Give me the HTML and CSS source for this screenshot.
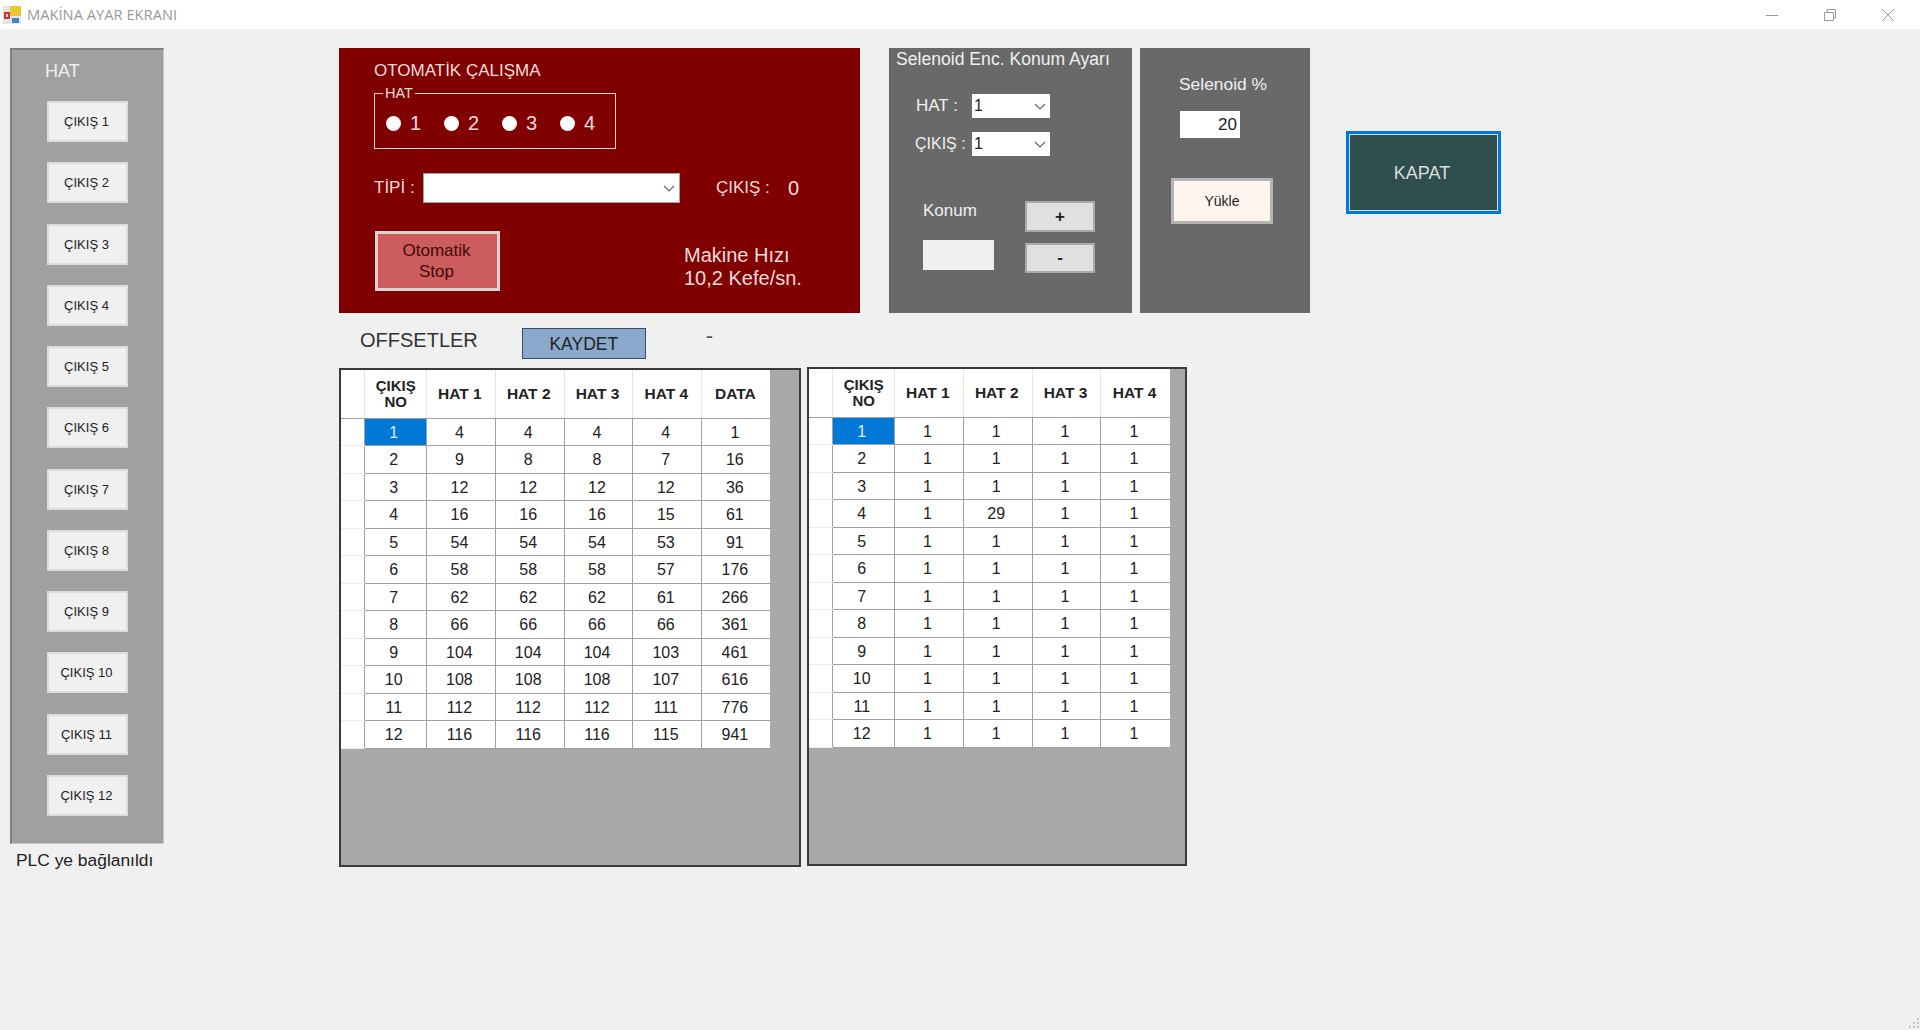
FILE: index.html
```html
<!DOCTYPE html>
<html lang="tr">
<head>
  <meta charset="UTF-8">
  <title>MAKİNA AYAR EKRANI</title>
  <link rel="stylesheet" href="styles.css">
</head>
<body>

  <header class="titlebar">
    <svg class="app-icon" width="18" height="18" viewBox="0 0 18 18">
      <rect x="0" y="0" width="18" height="18" fill="#e4e4ea"/>
      <rect x="7" y="0" width="11" height="10" fill="#e8c832"/>
      <rect x="1" y="6" width="6" height="7" fill="#c8372d"/>
      <rect x="3" y="8" width="2" height="3" fill="#f4d8d0"/>
      <rect x="9" y="12" width="7" height="5" fill="#3f83cf"/>
    </svg>
    <span class="title">MAKİNA AYAR EKRANI</span>
    <div class="win-buttons">
      <svg width="12" height="12" viewBox="0 0 12 12"><path d="M0 6.5H12" stroke="#999" fill="none"/></svg>
      <svg width="12" height="12" viewBox="0 0 12 12"><path d="M.5 3.5H9.5V11.5H.5ZM3 3V.5H11.5V9H10" stroke="#999" fill="none"/></svg>
      <svg width="12" height="12" viewBox="0 0 12 12"><path d="M0 0L12 12M12 0L0 12" stroke="#999" fill="none"/></svg>
    </div>
  </header>

  <main class="main">

    <div class="left">
      <nav class="sidebar">
        <div class="sidebar-title">HAT</div>
        <button class="out-btn">ÇIKIŞ 1</button>
        <button class="out-btn">ÇIKIŞ 2</button>
        <button class="out-btn">ÇIKIŞ 3</button>
        <button class="out-btn">ÇIKIŞ 4</button>
        <button class="out-btn">ÇIKIŞ 5</button>
        <button class="out-btn">ÇIKIŞ 6</button>
        <button class="out-btn">ÇIKIŞ 7</button>
        <button class="out-btn">ÇIKIŞ 8</button>
        <button class="out-btn">ÇIKIŞ 9</button>
        <button class="out-btn">ÇIKIŞ 10</button>
        <button class="out-btn">ÇIKIŞ 11</button>
        <button class="out-btn">ÇIKIŞ 12</button>
      </nav>
      <div class="status">PLC ye bağlanıldı</div>
    </div>

    <div class="center">
      <div class="top-row">

        <section class="auto-panel">
          <div class="auto-title">OTOMATİK ÇALIŞMA</div>
          <fieldset class="line-group">
            <legend>HAT</legend>
            <label><input type="radio" name="hat"> 1</label>
            <label><input type="radio" name="hat"> 2</label>
            <label><input type="radio" name="hat"> 3</label>
            <label><input type="radio" name="hat"> 4</label>
          </fieldset>
          <div class="type-row">
            <span class="type-label">TİPİ :</span>
            <div class="combo combo-type">
              <svg width="12" height="7" viewBox="0 0 12 7"><path d="M1 1L6 6L11 1" stroke="#666" stroke-width="1.2" fill="none"/></svg>
            </div>
            <span class="out-label">ÇIKIŞ :</span>
            <span class="out-value">0</span>
          </div>
          <div class="stop-row">
            <button class="stop-btn">Otomatik<br>Stop</button>
            <div class="speed">Makine Hızı<br>10,2 Kefe/sn.</div>
          </div>
        </section>

        <section class="enc-panel">
          <div class="enc-title">Selenoid Enc. Konum Ayarı</div>
          <div class="enc-row enc-row-first">
            <span class="enc-label">HAT :</span>
            <div class="combo combo-small">
              <span>1</span>
              <svg width="12" height="7" viewBox="0 0 12 7"><path d="M1 1L6 6L11 1" stroke="#666" stroke-width="1.2" fill="none"/></svg>
            </div>
          </div>
          <div class="enc-row">
            <span class="enc-label enc-label-out">ÇIKIŞ :</span>
            <div class="combo combo-small">
              <span>1</span>
              <svg width="12" height="7" viewBox="0 0 12 7"><path d="M1 1L6 6L11 1" stroke="#666" stroke-width="1.2" fill="none"/></svg>
            </div>
          </div>
          <div class="pos-block">
            <div class="pos-left">
              <div class="pos-label">Konum</div>
              <div class="pos-box"></div>
            </div>
            <div class="pos-right">
              <button class="step-btn step-plus">+</button>
              <button class="step-btn step-minus">-</button>
            </div>
          </div>
        </section>

        <section class="percent-panel">
          <div class="percent-label">Selenoid %</div>
          <div class="percent-box">20</div>
          <button class="load-btn">Yükle</button>
        </section>

        <button class="close-btn">KAPAT</button>
      </div>

      <div class="offset-row">
        <span class="offset-title">OFFSETLER</span>
        <button class="save-btn">KAYDET</button>
        <span class="dash">-</span>
      </div>

      <div class="grids">
        <div class="grid-box grid-left">
          <table class="grid">
            <thead>
              <tr><th class="corner"></th><th>ÇIKIŞ<br>NO</th><th>HAT 1</th><th>HAT 2</th><th>HAT 3</th><th>HAT 4</th><th>DATA</th></tr>
            </thead>
            <tbody>
              <tr><th></th><td class="selected">1</td><td>4</td><td>4</td><td>4</td><td>4</td><td>1</td></tr>
              <tr><th></th><td>2</td><td>9</td><td>8</td><td>8</td><td>7</td><td>16</td></tr>
              <tr><th></th><td>3</td><td>12</td><td>12</td><td>12</td><td>12</td><td>36</td></tr>
              <tr><th></th><td>4</td><td>16</td><td>16</td><td>16</td><td>15</td><td>61</td></tr>
              <tr><th></th><td>5</td><td>54</td><td>54</td><td>54</td><td>53</td><td>91</td></tr>
              <tr><th></th><td>6</td><td>58</td><td>58</td><td>58</td><td>57</td><td>176</td></tr>
              <tr><th></th><td>7</td><td>62</td><td>62</td><td>62</td><td>61</td><td>266</td></tr>
              <tr><th></th><td>8</td><td>66</td><td>66</td><td>66</td><td>66</td><td>361</td></tr>
              <tr><th></th><td>9</td><td>104</td><td>104</td><td>104</td><td>103</td><td>461</td></tr>
              <tr><th></th><td>10</td><td>108</td><td>108</td><td>108</td><td>107</td><td>616</td></tr>
              <tr><th></th><td>11</td><td>112</td><td>112</td><td>112</td><td>111</td><td>776</td></tr>
              <tr><th></th><td>12</td><td>116</td><td>116</td><td>116</td><td>115</td><td>941</td></tr>
            </tbody>
          </table>
        </div>

        <div class="grid-box grid-right">
          <table class="grid">
            <thead>
              <tr><th class="corner"></th><th>ÇIKIŞ<br>NO</th><th>HAT 1</th><th>HAT 2</th><th>HAT 3</th><th>HAT 4</th></tr>
            </thead>
            <tbody>
              <tr><th></th><td class="selected">1</td><td>1</td><td>1</td><td>1</td><td>1</td></tr>
              <tr><th></th><td>2</td><td>1</td><td>1</td><td>1</td><td>1</td></tr>
              <tr><th></th><td>3</td><td>1</td><td>1</td><td>1</td><td>1</td></tr>
              <tr><th></th><td>4</td><td>1</td><td>29</td><td>1</td><td>1</td></tr>
              <tr><th></th><td>5</td><td>1</td><td>1</td><td>1</td><td>1</td></tr>
              <tr><th></th><td>6</td><td>1</td><td>1</td><td>1</td><td>1</td></tr>
              <tr><th></th><td>7</td><td>1</td><td>1</td><td>1</td><td>1</td></tr>
              <tr><th></th><td>8</td><td>1</td><td>1</td><td>1</td><td>1</td></tr>
              <tr><th></th><td>9</td><td>1</td><td>1</td><td>1</td><td>1</td></tr>
              <tr><th></th><td>10</td><td>1</td><td>1</td><td>1</td><td>1</td></tr>
              <tr><th></th><td>11</td><td>1</td><td>1</td><td>1</td><td>1</td></tr>
              <tr><th></th><td>12</td><td>1</td><td>1</td><td>1</td><td>1</td></tr>
            </tbody>
          </table>
        </div>
      </div>
    </div>
  </main>

  <!-- resize grip -->
  <svg class="grip" width="11" height="11" viewBox="0 0 11 11">
    <g fill="#c4c4c4">
      <rect x="8" y="0" width="2" height="2"/>
      <rect x="4" y="4" width="2" height="2"/><rect x="8" y="4" width="2" height="2"/>
      <rect x="0" y="8" width="2" height="2"/><rect x="4" y="8" width="2" height="2"/><rect x="8" y="8" width="2" height="2"/>
    </g>
  </svg>

</body>
</html>
```

FILE: styles.css
```css
html, body {
  margin: 0;
  height: 100%;
  overflow: hidden;
}

body {
  font-family: "Liberation Sans", Arial, sans-serif;
  background-color: #f0f0f0;
  color: #222;
  position: relative;
}

button {
  font-family: inherit;
  padding: 0;
}

/* Title bar */
.titlebar {
  height: 29px;
  background-color: #fff;
  display: flex;
  align-items: center;
  padding-left: 3px;
}

.app-icon {
  margin-right: 6px;
}

.title {
  font-family: "Open Sans", sans-serif;
  font-size: 14.7px;
  color: #999;
  margin-top: -2px;
}

.win-buttons {
  margin-left: auto;
  display: flex;
  gap: 46px;
  padding-right: 26px;
}

/* Left column */
.main {
  display: flex;
  padding: 19px 0 0 10px;
}

.left {
  width: 154px;
}

.sidebar {
  box-sizing: border-box;
  height: 796px;
  background-color: #a0a0a0;
  border-top: 2px solid #808080;
  border-left: 2px solid #808080;
  border-bottom: 1px solid #c8c8c8;
  border-right: 1px solid #c8c8c8;
  padding: 11px 0 0 35px;
}

.sidebar-title {
  font-size: 18px;
  color: #f0f0f0;
  line-height: 20px;
  margin-bottom: 20px;
  margin-left: -2px;
}

.out-btn {
  display: block;
  box-sizing: border-box;
  width: 81px;
  height: 41px;
  margin-bottom: 20.25px;
  padding-right: 2px;
  background-color: #f0f0f0;
  border: 2px solid #dcdcdc;
  font-size: 13px;
  color: #222;
}

.status {
  font-size: 17.4px;
  margin: 6px 0 0 6px;
  line-height: 20px;
  white-space: nowrap;
}

/* Center */
.center {
  margin-left: 175px;
}

.top-row {
  display: flex;
  align-items: flex-start;
}

.auto-panel {
  box-sizing: border-box;
  width: 521px;
  height: 265px;
  background-color: #800000;
  color: #f2dcdc;
  padding: 13px 0 0 35px;
}

.auto-title {
  font-size: 17px;
  line-height: 19px;
}

.line-group {
  box-sizing: border-box;
  width: 242px;
  min-width: 0;
  height: 63px;
  margin: 6px 0 0;
  padding: 0 0 0 11px;
  border: 1px solid #f2dcdc;
  display: flex;
  align-items: center;
}

.line-group legend {
  font-size: 14.5px;
  line-height: 14px;
  padding: 0 2px;
  margin-left: -3px;
}

.line-group label {
  flex: none;
  width: 58px;
  font-size: 20px;
  display: flex;
  align-items: center;
  gap: 9px;
  margin-top: -2px;
}

.line-group input {
  appearance: none;
  width: 15px;
  height: 15px;
  margin: 0;
  border-radius: 50%;
  background-color: #fff;
}

.type-row {
  display: flex;
  align-items: center;
  margin-top: 24px;
  font-size: 17px;
}

.type-label {
  width: 49px;
}

.combo {
  box-sizing: border-box;
  background-color: #fff;
  color: #222;
  display: flex;
  align-items: center;
  justify-content: space-between;
}

.combo-type {
  width: 257px;
  height: 30px;
  border: 1px solid #a8a0a0;
  justify-content: flex-end;
  padding-right: 4px;
}

.out-label {
  margin-left: 36px;
  width: 72px;
}

.out-value {
  font-size: 20px;
}

.stop-row {
  display: flex;
  margin-top: 28px;
}

.stop-btn {
  box-sizing: border-box;
  width: 125px;
  height: 60px;
  margin-left: 1px;
  padding-right: 2px;
  background-color: #cd5c5c;
  border: 3px solid #dcd4d4;
  font-size: 17px;
  line-height: 21px;
  color: #3c0a0a;
}

.speed {
  margin: 13px 0 0 184px;
  font-size: 20px;
  line-height: 23px;
  white-space: nowrap;
}

/* Selenoid panels */
.enc-panel {
  box-sizing: border-box;
  width: 243px;
  height: 265px;
  margin-left: 29px;
  background-color: #696969;
  color: #f0f0f0;
  padding: 1px 0 0 7px;
}

.enc-title {
  font-size: 17.6px;
  line-height: 20px;
  white-space: nowrap;
}

.enc-row {
  display: flex;
  align-items: center;
  margin-top: 14px;
}

.enc-row-first {
  margin-top: 25px;
}

.enc-label {
  width: 76px;
  padding-left: 20px;
  box-sizing: border-box;
  font-size: 17px;
  white-space: nowrap;
}

.enc-label-out {
  padding-left: 19px;
  font-size: 16px;
}

.combo-small {
  width: 78px;
  height: 24px;
  font-size: 16px;
  padding: 0 4px 0 2px;
}

.pos-block {
  display: flex;
  margin: 45px 0 0 27px;
}

.pos-left {
  width: 102px;
}

.pos-label {
  font-size: 17px;
  line-height: 20px;
}

.pos-box {
  width: 71px;
  height: 30px;
  margin-top: 19px;
  background-color: #f0f0f0;
}

.pos-right {
  display: flex;
  flex-direction: column;
  gap: 11px;
}

.step-btn {
  box-sizing: border-box;
  width: 70px;
  background-color: #e0e0e0;
  border: 2px solid #a9a9a9;
  font-size: 17px;
  color: #222;
  font-weight: bold;
}

.step-plus {
  height: 31px;
}

.step-minus {
  height: 30px;
}

.percent-panel {
  box-sizing: border-box;
  width: 170px;
  height: 265px;
  margin-left: 8px;
  background-color: #696969;
  color: #f0f0f0;
  padding-top: 26px;
}

.percent-label {
  font-size: 17.4px;
  line-height: 20px;
  margin-left: 39px;
}

.percent-box {
  box-sizing: border-box;
  width: 60px;
  height: 27px;
  margin: 17px 0 0 40px;
  background-color: #fff;
  color: #222;
  font-size: 17px;
  line-height: 27px;
  text-align: right;
  padding-right: 3px;
}

.load-btn {
  display: block;
  box-sizing: border-box;
  width: 102px;
  height: 46px;
  margin: 40px 0 0 31px;
  background-color: #fff5ee;
  border: 3px solid #b4b4b4;
  font-size: 14px;
  color: #222;
}

.close-btn {
  box-sizing: border-box;
  width: 155px;
  height: 83px;
  margin: 83px 0 0 36px;
  padding: 2px 3px 0 0;
  background-color: #2f4f4f;
  border: 3px solid #0078d7;
  outline: 1px solid #cfe0ea;
  outline-offset: -4px;
  font-size: 18px;
  color: #dcdcdc;
}

/* Offsets row */
.offset-row {
  display: flex;
  align-items: flex-start;
  height: 54px;
  padding-top: 15px;
  box-sizing: border-box;
}

.offset-title {
  font-size: 20px;
  line-height: 24px;
  margin-left: 21px;
  color: #333;
}

.save-btn {
  box-sizing: border-box;
  width: 124px;
  height: 31px;
  margin-left: 44px;
  padding-top: 2px;
  background-color: #8aa9cc;
  border: 1px solid #34506e;
  font-size: 17.5px;
  color: #222;
}

.dash {
  margin-left: 60px;
  font-size: 22px;
  line-height: 16px;
  color: #555;
}

/* Data grids */
.grids {
  display: flex;
  gap: 6px;
  align-items: flex-start;
}

.grid-box {
  box-sizing: border-box;
  height: 499px;
  background-color: #a9a9a9;
  border: 2px solid #3a3a3a;
}

.grid-left {
  width: 462px;
  margin-top: 1px;
}

.grid-right {
  width: 380px;
}

.grid {
  border-collapse: collapse;
  table-layout: fixed;
  background-color: #fff;
}

.grid th,
.grid td {
  box-sizing: border-box;
  padding: 0 3px 0 0;
}

.grid th {
  width: 68.8px;
  height: 48px;
  padding: 1px 2px 0 0;
  font-size: 15.5px;
  line-height: 16px;
  color: #222;
  border-left: 1px solid #e6e6e6;
  border-bottom: 1px solid #a0a0a0;
}

.grid th.corner,
.grid tbody th {
  width: 23px;
  border-left: none;
}

.grid thead th:nth-child(2) {
  width: 62.5px;
  padding: 1px 0 0 1px;
  font-size: 15px;
}

.grid tbody th {
  height: 27.5px;
  border-bottom: 1px solid #ececec;
}

.grid td {
  height: 27.5px;
  padding-top: 2px;
  text-align: center;
  font-size: 16px;
  border-left: 1px solid #a0a0a0;
  border-bottom: 1px solid #a0a0a0;
}

.grid td.selected {
  background-color: #0078d7;
  color: #e4eef8;
}

.grip {
  position: absolute;
  right: 0;
  bottom: 1px;
}
```
